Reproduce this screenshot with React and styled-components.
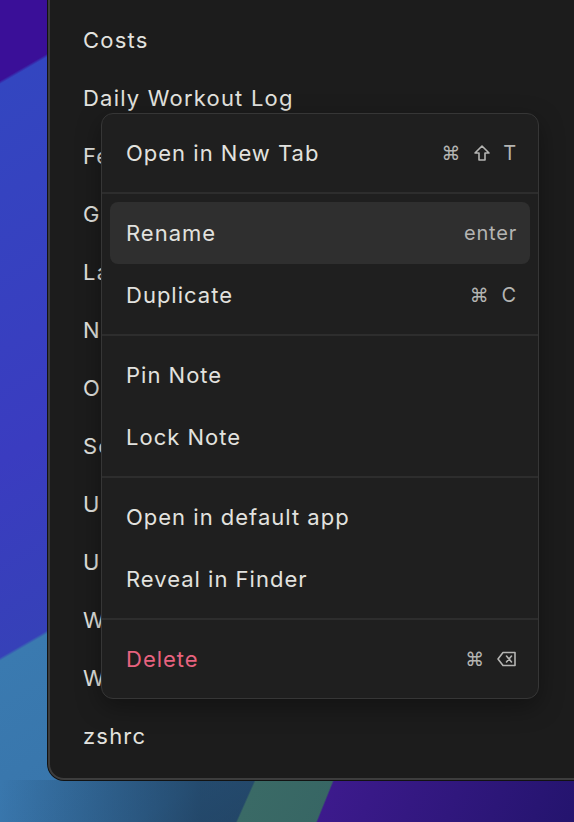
import React from "react";
import styled, { createGlobalStyle } from "styled-components";

const GlobalStyle = createGlobalStyle`
  html, body {
    margin: 0;
    padding: 0;
    width: 574px;
    height: 822px;
    overflow: hidden;
  }
  body {
    font-family: Inter, "Noto Sans", "Liberation Sans", sans-serif;
  }
`;

// 바탕화면 배경
const Desktop = styled.div`
  position: relative;
  width: 574px;
  height: 822px;
  overflow: hidden;
  padding-left: 48px;
  box-sizing: border-box;
  background:
    linear-gradient(112deg, transparent 0, transparent 71.5%, #3c1a8c 71.7%, #24146e 100%),
    linear-gradient(114deg, transparent 0, transparent 64%, #3a6a66 64.2%, #2f5a5e 100%),
    linear-gradient(90deg, rgba(20, 40, 60, 0) 0, rgba(20, 40, 60, 0.55) 35%, rgba(20, 40, 60, 0.55) 100%) 0 780px / 100% 42px no-repeat,
    linear-gradient(150deg, #3a0f98 0, #3a0f98 7%, #3346c0 7.3%, #3a3cc0 40%, #3641b8 57%, #3a7ab0 57.3%, #3874aa 78%, #2a4e74 100%);
`;

const Window = styled.div`
  position: relative;
  margin-top: -20px;
  width: 560px;
  height: 800px;
  box-sizing: border-box;
  background: #1c1c1c;
  border: 2px solid #3d3d3d;
  border-radius: 16px;
  box-shadow: 0 0 0 1px #121212;
  padding: 29px 0 14px 33px;
`;

const NoteList = styled.ul`
  list-style: none;
  margin: 0;
  padding: 0;
`;

const NoteItem = styled.li`
  height: 58px;
  display: flex;
  align-items: center;
  color: #e2e2df;
  font-size: 22px;
  letter-spacing: 1.2px;
  white-space: nowrap;
`;

// 컨텍스트 메뉴
const Menu = styled.div`
  position: absolute;
  left: 51px;
  top: 131px;
  width: 438px;
  box-sizing: border-box;
  background: #1f1f1f;
  border: 1px solid #363636;
  border-radius: 12px;
  box-shadow: 0 8px 24px rgba(0, 0, 0, 0.35);
  overflow: hidden;
`;

const Section = styled.div`
  padding: 8px 8px;
  & + & {
    border-top: 2px solid #2d2d2d;
  }
`;

const MenuItem = styled.div`
  height: 62px;
  display: flex;
  align-items: center;
  justify-content: space-between;
  padding: 0 13px 0 16px;
  border-radius: 8px;
  background: ${(p) => (p.$active ? "#2f2f2f" : "transparent")};
  color: ${(p) => (p.$danger ? "#e8637f" : "#e2e2df")};
  font-size: 22px;
  letter-spacing: 1px;
`;

const Shortcut = styled.span`
  display: flex;
  align-items: center;
  gap: 12px;
  color: #b4b4b2;
  font-size: 20px;
  letter-spacing: 0.8px;
`;

const Cmd = styled.span`
  font-family: "DejaVu Sans", sans-serif;
  font-size: 19px;
`;

const ShiftIcon = () => (
  <svg width="18" height="18" viewBox="0 0 18 18" fill="none" stroke="#b4b4b2" strokeWidth="1.6" strokeLinejoin="round">
    <path d="M9 2 L16 9 H12 V16 H6 V9 H2 Z" />
  </svg>
);

const DeleteIcon = () => (
  <svg width="20" height="16" viewBox="0 0 20 16" fill="none" stroke="#b4b4b2" strokeWidth="1.6" strokeLinejoin="round" strokeLinecap="round">
    <path d="M6 1.5 H18 V14.5 H6 L1 8 Z" />
    <path d="M9.5 5 L14.5 11 M14.5 5 L9.5 11" />
  </svg>
);

const notes = [
  "Costs",
  "Daily Workout Log",
  "Feature Ideas",
  "Groceries",
  "Launch Plan",
  "Notes",
  "Onboarding",
  "Scratchpad",
  "Untitled",
  "Untitled 2",
  "Weekly Review",
  "Work Journal",
  "zshrc",
];

const sections = [
  [{ label: "Open in New Tab", keys: "tab" }],
  [
    { label: "Rename", keys: "enter", active: true },
    { label: "Duplicate", keys: "dup" },
  ],
  [{ label: "Pin Note" }, { label: "Lock Note" }],
  [{ label: "Open in default app" }, { label: "Reveal in Finder" }],
  [{ label: "Delete", keys: "del", danger: true }],
];

const renderKeys = (keys) => {
  if (keys === "tab")
    return (
      <Shortcut>
        <Cmd>⌘</Cmd>
        <ShiftIcon />
        <span>T</span>
      </Shortcut>
    );
  if (keys === "enter") return <Shortcut>enter</Shortcut>;
  if (keys === "dup")
    return (
      <Shortcut>
        <Cmd>⌘</Cmd>
        <span>C</span>
      </Shortcut>
    );
  if (keys === "del")
    return (
      <Shortcut>
        <Cmd>⌘</Cmd>
        <DeleteIcon />
      </Shortcut>
    );
  return null;
};

const App = () => {
  return (
    <>
      <GlobalStyle />
      <Desktop>
        <Window>
          <NoteList>
            {notes.map((n) => (
              <NoteItem key={n}>{n}</NoteItem>
            ))}
          </NoteList>
          <Menu>
            {sections.map((items, i) => (
              <Section key={i}>
                {items.map((it) => (
                  <MenuItem key={it.label} $active={it.active} $danger={it.danger}>
                    <span>{it.label}</span>
                    {renderKeys(it.keys)}
                  </MenuItem>
                ))}
              </Section>
            ))}
          </Menu>
        </Window>
      </Desktop>
    </>
  );
};

export default App;
